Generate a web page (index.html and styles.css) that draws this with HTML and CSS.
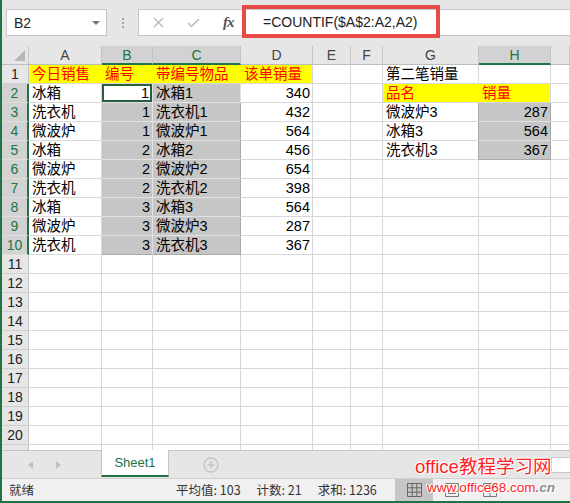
FILE: index.html
```html
<!DOCTYPE html>
<html>
<head>
<meta charset="utf-8">
<link rel="stylesheet" href="styles.css">
</head>
<body>
<div class="app">
  <div class="fbar">
    <div class="namebox"><span>B2</span><span class="dd"></span></div>
    <div class="grip"><i></i><i></i><i></i></div>
    <div class="fbtns">
      <svg class="ic-x" width="11" height="11" viewBox="0 0 11 11"><path d="M1 1L10 10M10 1L1 10" stroke="#b8b8b8" stroke-width="1.4" fill="none"/></svg>
      <svg class="ic-ok" width="13" height="10" viewBox="0 0 13 10"><path d="M1 5L4.5 8.5L12 1" stroke="#b8b8b8" stroke-width="1.5" fill="none"/></svg>
      <span class="fx">fx</span>
    </div>
    <div class="finput">=COUNTIF($A$2:A2,A2)</div>
    <div class="redbox"></div>
  </div>

  <div class="grid">
    <div class="h corner"><span class="tri"></span></div><div class="h">A</div><div class="h hs">B</div><div class="h hs">C</div><div class="h">D</div><div class="h">E</div><div class="h">F</div><div class="h">G</div><div class="h hs">H</div><div class="h"></div>

    <div class="rh">1</div><div class="y">今日销售</div><div class="y">编号</div><div class="y">带编号物品</div><div class="y ye">该单销量</div><div></div><div></div><div>第二笔销量</div><div></div><div></div>

    <div class="rh rhs">2</div><div>冰箱</div><div class="n a">1</div><div class="s">冰箱1</div><div class="n">340</div><div></div><div></div><div class="y">品名</div><div class="y ye">销量</div><div></div>

    <div class="rh rhs">3</div><div>洗衣机</div><div class="n s">1</div><div class="s sr">洗衣机1</div><div class="n">432</div><div></div><div></div><div class="sl">微波炉3</div><div class="n s sr">287</div><div></div>

    <div class="rh rhs">4</div><div>微波炉</div><div class="n s">1</div><div class="s sr">微波炉1</div><div class="n">564</div><div></div><div></div><div class="sl">冰箱3</div><div class="n s sr">564</div><div></div>

    <div class="rh rhs">5</div><div>冰箱</div><div class="n s">2</div><div class="s sr">冰箱2</div><div class="n">456</div><div></div><div></div><div class="sl">洗衣机3</div><div class="n s sr sb">367</div><div></div>

    <div class="rh rhs">6</div><div>微波炉</div><div class="n s">2</div><div class="s sr">微波炉2</div><div class="n">654</div><div></div><div></div><div></div><div></div><div></div>

    <div class="rh rhs">7</div><div>洗衣机</div><div class="n s">2</div><div class="s sr">洗衣机2</div><div class="n">398</div><div></div><div></div><div></div><div></div><div></div>

    <div class="rh rhs">8</div><div>冰箱</div><div class="n s">3</div><div class="s sr">冰箱3</div><div class="n">564</div><div></div><div></div><div></div><div></div><div></div>

    <div class="rh rhs">9</div><div>微波炉</div><div class="n s">3</div><div class="s sr">微波炉3</div><div class="n">287</div><div></div><div></div><div></div><div></div><div></div>

    <div class="rh rhs">10</div><div>洗衣机</div><div class="n s sb">3</div><div class="s sr sb">洗衣机3</div><div class="n">367</div><div></div><div></div><div></div><div></div><div></div>

    <div class="rh">11</div><div></div><div></div><div></div><div></div><div></div><div></div><div></div><div></div><div></div>
    <div class="rh">12</div><div></div><div></div><div></div><div></div><div></div><div></div><div></div><div></div><div></div>
    <div class="rh">13</div><div></div><div></div><div></div><div></div><div></div><div></div><div></div><div></div><div></div>
    <div class="rh">14</div><div></div><div></div><div></div><div></div><div></div><div></div><div></div><div></div><div></div>
    <div class="rh">15</div><div></div><div></div><div></div><div></div><div></div><div></div><div></div><div></div><div></div>
    <div class="rh">16</div><div></div><div></div><div></div><div></div><div></div><div></div><div></div><div></div><div></div>
    <div class="rh">17</div><div></div><div></div><div></div><div></div><div></div><div></div><div></div><div></div><div></div>
    <div class="rh">18</div><div></div><div></div><div></div><div></div><div></div><div></div><div></div><div></div><div></div>
    <div class="rh">19</div><div></div><div></div><div></div><div></div><div></div><div></div><div></div><div></div><div></div>
    <div class="rh">20</div><div></div><div></div><div></div><div></div><div></div><div></div><div></div><div></div><div></div>
    <div class="rh"></div><div></div><div></div><div></div><div></div><div></div><div></div><div></div><div></div><div></div>
  </div>

  <div class="tabs">
    <div class="arrows"><span class="tl"></span><span class="tr"></span></div>
    <div class="tab">Sheet1</div>
    <svg class="plus" width="16" height="16" viewBox="0 0 16 16"><circle cx="8" cy="8" r="7" stroke="#c4c4c4" stroke-width="1.3" fill="none"/><path d="M8 4.5V11.5M4.5 8H11.5" stroke="#c4c4c4" stroke-width="1.5"/></svg>
    <div class="hscroll"></div>
  </div>

  <div class="status">
    <span class="ready">就绪</span>
    <div class="stats"><span>平均值: 103</span><span>计数: 21</span><span>求和: 1236</span></div>
    <div class="view on">
      <svg width="15" height="14" viewBox="0 0 15 14"><path d="M0.5 0.5H14.5V13.5H0.5ZM0.5 4.8H14.5M0.5 9.2H14.5M5.2 0.5V13.5M9.8 0.5V13.5" stroke="#666" stroke-width="1" fill="none"/></svg>
    </div>
    <div class="view">
      <svg width="14" height="14" viewBox="0 0 14 14"><path d="M0.5 0.5H13.5V13.5H0.5ZM3.5 3.5H10.5V10.5H3.5Z" stroke="#777" stroke-width="1" fill="none"/></svg>
    </div>
    <div class="view">
      <svg width="14" height="14" viewBox="0 0 14 14"><path d="M0.5 0.5H13.5V13.5H0.5ZM0.5 7H13.5M7 0.5V13.5" stroke="#777" stroke-width="1" fill="none"/></svg>
    </div>
  </div>

  <div class="wm">
    <div class="wm1">office教程学习网</div>
    <div class="wm2">www.office68.com<span class="cn">.cn</span></div>
  </div>
</div>
</body>
</html>
```

FILE: styles.css
```css
* { box-sizing: border-box; margin: 0; padding: 0; }
html, body { width: 570px; height: 503px; overflow: hidden; }
body { font-family: "Liberation Sans", "Noto Sans CJK SC", sans-serif; background: #e6e6e6; }

.app {
  position: relative;
  width: 570px;
  height: 503px;
  border-left: 2px solid #217346;
  background: #e6e6e6;
  display: flex;
  flex-direction: column;
  overflow: hidden;
}

/* formula bar */
.fbar {
  position: relative;
  height: 46px;
  flex: none;
  display: flex;
  align-items: flex-start;
  padding-top: 9px;
  background: #e6e6e6;
}
.namebox {
  margin-left: 4px;
  width: 101px;
  height: 27px;
  background: #fff;
  border: 1px solid #c6c6c6;
  display: flex;
  align-items: center;
  justify-content: space-between;
  padding: 0 6px 0 7px;
  font-size: 14px;
  color: #222;
}
.dd {
  width: 0; height: 0;
  border-left: 4px solid transparent;
  border-right: 4px solid transparent;
  border-top: 4px solid #777;
}
.grip {
  width: 31px;
  height: 27px;
  display: flex;
  flex-direction: column;
  align-items: center;
  justify-content: center;
  gap: 2px;
}
.grip i { display: block; width: 2px; height: 2px; background: #a4a4a4; }
.fbtns {
  width: 105px;
  height: 27px;
  background: #fff;
  border: 1px solid #c6c6c6;
  border-right: none;
  display: flex;
  align-items: center;
}
.ic-x { margin-left: 14px; }
.ic-ok { margin-left: 23px; }
.fx {
  margin-left: 23px;
  font-family: "Liberation Serif", serif;
  font-style: italic;
  font-weight: bold;
  font-size: 15px;
  color: #555;
  letter-spacing: -1px;
}
.finput {
  flex: 1;
  height: 27px;
  background: #fff;
  border: 1px solid #c6c6c6;
  border-right: none;
  padding-left: 19px;
  font-size: 14px;
  line-height: 25px;
  color: #222;
}
.redbox {
  position: absolute;
  left: 240px;
  top: 5px;
  width: 198px;
  height: 33px;
  border: 4px solid #e84a47;
}

/* grid */
.grid {
  flex: none;
  height: 404px;
  overflow: hidden;
  background: #fff;
  display: grid;
  grid-template-columns: 27px 73px 51px 88px 72px 38px 32px 96px 72px 1fr;
  grid-auto-rows: 19px;
}
.grid > div {
  border-right: 1px solid #d8d8d8;
  border-bottom: 1px solid #d8d8d8;
  font-size: 14.5px;
  line-height: 19px;
  padding: 0 2px 0 3px;
  white-space: nowrap;
  color: #000;
}
.grid > .h {
  background: #e6e6e6;
  color: #444;
  text-align: center;
  font-size: 14px;
  padding: 0;
  line-height: 19px;
  border-right-color: #c4c4c4;
  border-bottom-color: #bdbdbd;
}
.grid > .hs {
  background: #d2d2d2;
  color: #217346;
  border-bottom: 2px solid #217346;
}
.corner { position: relative; }
.tri {
  position: absolute;
  right: 3px;
  bottom: 3px;
  width: 0; height: 0;
  border-left: 11px solid transparent;
  border-bottom: 11px solid #b6b6b6;
}
.grid > .rh {
  background: #e6e6e6;
  color: #222;
  text-align: center;
  font-size: 14px;
  padding: 0;
  border-right-color: #c4c4c4;
  border-bottom-color: #d0d0d0;
}
.grid > .rhs {
  background: #d2d2d2;
  color: #217346;
  border-right: 2px solid #217346;
  border-bottom-color: #dedede;
}
.grid > .y {
  background: #ffff00;
  color: #ff0000;
  border-right-color: #ffff00;
}
.grid > .ye { border-right-color: #d8d8d8; }
.grid > .n { text-align: right; }
.grid > .s {
  background: #c6c6c6;
  border-right-color: #e2e2e2;
  border-bottom-color: #e2e2e2;
}
.grid > .sr { border-right-color: #a8a8a8; }
.grid > .sb { border-bottom-color: #a8a8a8; }
.grid > .sl { border-right-color: #a8a8a8; }
.grid > .a {
  background: #fff;
  border-bottom-color: #e2e2e2;
  border-right-color: #e2e2e2;
  box-shadow: inset 0 0 0 2px #2a5e40;
  padding-right: 3px;
}

/* sheet tabs */
.tabs {
  flex: none;
  height: 28px;
  border-top: 1px solid #c4c4c4;
  background: #e6e6e6;
  display: flex;
  align-items: flex-start;
}
.arrows {
  width: 99px;
  height: 27px;
  display: flex;
  align-items: center;
}
.tl, .tr { display: block; width: 0; height: 0; border-top: 4px solid transparent; border-bottom: 4px solid transparent; }
.tl { margin-left: 26px; border-right: 5px solid #c0c0c0; }
.tr { margin-left: 23px; border-left: 5px solid #c0c0c0; }
.tab {
  width: 68px;
  height: 27px;
  margin-top: -1px;
  background: #fff;
  border-left: 1px solid #c4c4c4;
  border-right: 1px solid #c4c4c4;
  border-bottom: 2px solid #217346;
  color: #217346;
  font-size: 13px;
  text-align: center;
  line-height: 25px;
}
.plus { margin-left: 34px; margin-top: 6px; }
.hscroll {
  margin-left: auto;
  margin-top: 6px;
  width: 19px;
  height: 16px;
  background: #fff;
  border: 1px solid #c6c6c6;
  border-right: none;
}

/* status bar */
.status {
  flex: none;
  height: 25px;
  border-top: 1px solid #d0d0d0;
  border-bottom: 2px solid #217346;
  background: #f0f0f0;
  display: flex;
  align-items: stretch;
  font-family: "Noto Sans CJK SC", "Liberation Sans", sans-serif;
  font-size: 12.5px;
  color: #333;
}
.ready { width: 174px; padding-left: 7px; line-height: 22px; }
.stats { width: 219px; display: flex; gap: 16px; line-height: 22px; }
.view {
  width: 38px;
  display: flex;
  align-items: center;
  justify-content: center;
}
.view.on { background: #c6c6c6; }

/* watermark */
.wm {
  position: absolute;
  left: 413px;
  top: 456px;
  color: #ff1e1e;
  text-shadow: 0 0 2px #fff, 0 0 2px #fff, 1px 1px 0 #fff, -1px -1px 0 #fff;
}
.wm1 { font-size: 18.5px; line-height: 22px; }
.wm2 { margin-left: 12px; font-size: 13.5px; line-height: 19px; }
.cn { color: #8c8c8c; font-style: italic; font-weight: bold; }
```
